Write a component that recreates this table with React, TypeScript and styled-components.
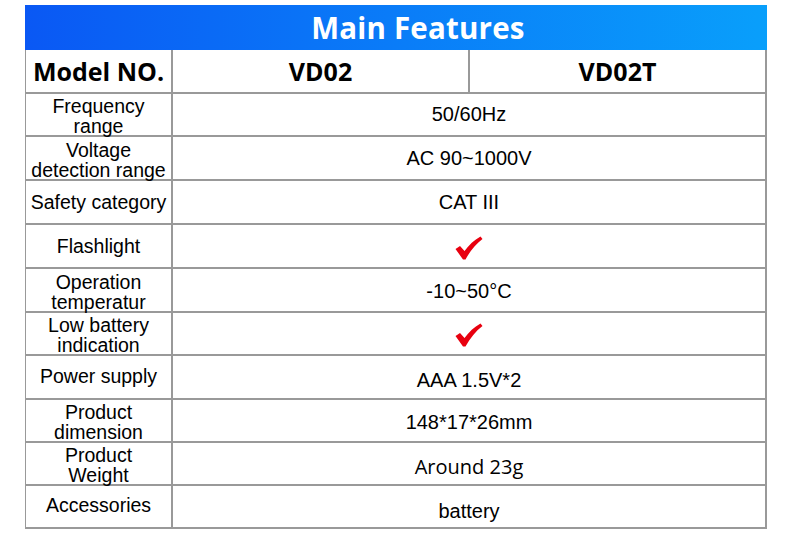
import React from "react";
import styled, { createGlobalStyle } from "styled-components";

const Global = createGlobalStyle`
  html, body { margin: 0; padding: 0; background: #ffffff; }
  body { font-family: "Liberation Sans", Arial, sans-serif; color: #000; }
`;

const Page = styled.div`
  width: 790px;
  height: 537px;
  box-sizing: border-box;
  padding: 5px 0 0 25px;
  background: #ffffff;
`;

const Sheet = styled.div`
  width: 742px;
  display: flex;
  flex-direction: column;
`;

const TitleBar = styled.div`
  height: 45px;
  box-sizing: border-box;
  padding-left: 44px;
  display: flex;
  align-items: center;
  justify-content: center;
  background: linear-gradient(90deg, #0a58f4 0%, #0a7cf8 50%, #099ffb 100%);
  color: #ffffff;
  font-family: "Open Sans", "Noto Sans", sans-serif;
  font-weight: 700;
  font-size: 29.5px;
  letter-spacing: 0.2px;
`;

const Grid = styled.div<{ $rows: string }>`
  display: grid;
  grid-template-columns: 145px 295px 295px;
  grid-template-rows: ${(p) => p.$rows};
  gap: 2px;
  padding: 0 2px 2px 1px;
  background: #999999;
`;

const Cell = styled.div`
  background: #ffffff;
  display: flex;
  align-items: center;
  justify-content: center;
  text-align: center;
  box-sizing: border-box;
`;

const HeadCell = styled(Cell)`
  font-family: "Open Sans", "Noto Sans", sans-serif;
  font-weight: 700;
  font-size: 25px;
  color: #000;
`;

const LabelCell = styled(Cell)<{ $top: number; $bottom: number }>`
  font-family: "Liberation Sans", Arial, sans-serif;
  font-size: 19.5px;
  line-height: 20px;
  padding: ${(p) => p.$top}px 2px ${(p) => p.$bottom}px;
  color: #000;
`;

const ValueCell = styled(Cell)<{ $shift: number; $font?: string }>`
  grid-column: span 2;
  font-family: ${(p) => p.$font ?? `"Liberation Sans", Arial, sans-serif`};
  font-size: 20px;
  color: #000;
  padding-top: ${(p) => p.$shift * 2}px;
`;

const Check = () => (
  <svg width="28" height="24" viewBox="0 0 28 24" style={{ marginTop: 3 }}>
    <path
      d="M0.5 13 L5 10 L9.5 15 C14 9 19 4 25.5 0.5 L27.5 3 C21 8 15 15 10.5 23.5 L8 23.5 Z"
      fill="#e8000f"
    />
  </svg>
);

type Row = {
  label: string[];
  value?: string;
  check?: boolean;
  shift: number;
  font?: string;
  lift?: number;
};

const rows: Row[] = [
  { label: ["Frequency", "range"], value: "50/60Hz", shift: 0 },
  { label: ["Voltage", "detection range"], value: "AC 90~1000V", shift: 0 },
  { label: ["Safety category"], value: "CAT III", shift: 0, lift: 0 },
  { label: ["Flashlight"], check: true, shift: 0, lift: 1 },
  { label: ["Operation", "temperatur"], value: "-10~50°C", shift: 1 },
  { label: ["Low battery", "indication"], check: true, shift: 0 },
  { label: ["Power supply"], value: "AAA 1.5V*2", shift: 3, lift: 2 },
  { label: ["Product", "dimension"], value: "148*17*26mm", shift: 2 },
  {
    label: ["Product", "Weight"],
    value: "Around 23g",
    shift: 3,
    font: `"Open Sans", "Noto Sans", sans-serif`,
  },
  { label: ["Accessories"], value: "battery", shift: 5, lift: 4 },
];

const rowHeights = "42px 41px 42px 42px 42px 42px 41px 42px 41px 41px 41px";

export default function App() {
  return (
    <Page>
      <Global />
      <Sheet>
        <TitleBar>Main Features</TitleBar>
        <Grid $rows={rowHeights}>
          <HeadCell>Model NO.</HeadCell>
          <HeadCell>VD02</HeadCell>
          <HeadCell>VD02T</HeadCell>
          {rows.map((r, i) => {
            const single = r.label.length === 1;
            return (
              <React.Fragment key={i}>
                <LabelCell
                  $top={single ? 0 : 3}
                  $bottom={single ? r.lift ?? 0 : 0}
                >
                  <span>
                    {r.label.map((l, j) => (
                      <React.Fragment key={j}>
                        {j > 0 && <br />}
                        {l}
                      </React.Fragment>
                    ))}
                  </span>
                </LabelCell>
                <ValueCell $shift={r.shift} $font={r.font}>
                  {r.check ? <Check /> : r.value}
                </ValueCell>
              </React.Fragment>
            );
          })}
        </Grid>
      </Sheet>
    </Page>
  );
}
